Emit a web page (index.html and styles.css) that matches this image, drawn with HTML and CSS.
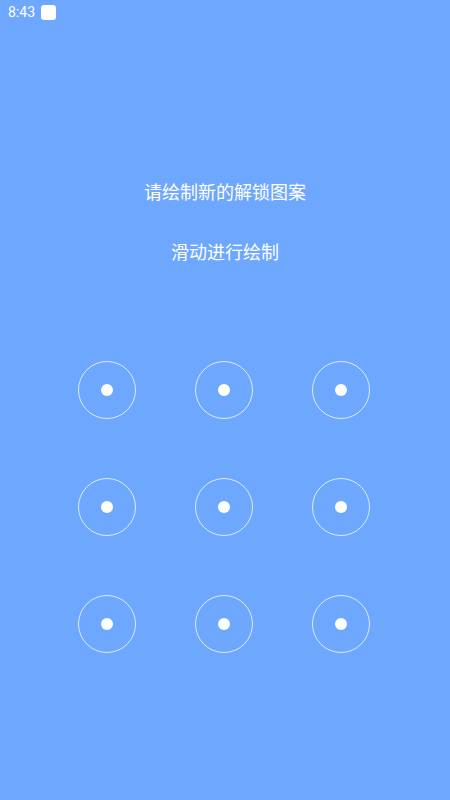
FILE: index.html
```html
<!DOCTYPE html>
<html lang="zh-CN">
<head>
    <meta charset="UTF-8">
    <meta name="viewport" content="width=device-width, initial-scale=1.0">
    <title>设置解锁图案</title>
    <link rel="stylesheet" href="styles.css">
</head>
<body>
    <div class="status-bar">
        <span class="time">8:43</span>
        <span class="status-icon"></span>
    </div>
    <main class="lock-screen">
        <h1 class="title">请绘制新的解锁图案</h1>
        <p class="hint">滑动进行绘制</p>
        <div class="pattern">
            <div class="cell"><div class="ring"><div class="dot"></div></div></div>
            <div class="cell"><div class="ring"><div class="dot"></div></div></div>
            <div class="cell"><div class="ring"><div class="dot"></div></div></div>
            <div class="cell"><div class="ring"><div class="dot"></div></div></div>
            <div class="cell"><div class="ring"><div class="dot"></div></div></div>
            <div class="cell"><div class="ring"><div class="dot"></div></div></div>
            <div class="cell"><div class="ring"><div class="dot"></div></div></div>
            <div class="cell"><div class="ring"><div class="dot"></div></div></div>
            <div class="cell"><div class="ring"><div class="dot"></div></div></div>
        </div>
    </main>
</body>
</html>
```

FILE: styles.css
```css
body {
    margin: 0;
    width: 450px;
    height: 800px;
    background-color: #6ea7fe;
    color: #fff;
    font-family: Roboto, "Noto Sans CJK SC", sans-serif;
    overflow: hidden;
}
.status-bar {
    height: 24px;
    display: flex;
    align-items: center;
    gap: 6px;
    padding-left: 8px;
}
.time {
    font-size: 14px;
}
.status-icon {
    width: 15px;
    height: 15px;
    background-color: #fff;
    border-radius: 3px;
}
.lock-screen {
    display: flex;
    flex-direction: column;
    align-items: center;
}
.title {
    margin: 157px 0 0;
    font-size: 18px;
    font-weight: normal;
    line-height: 24px;
}
.hint {
    margin: 36px 0 0;
    font-size: 18px;
    line-height: 24px;
}
.pattern {
    margin-top: 66px;
    margin-right: 2px;
    display: grid;
    grid-template-columns: repeat(3, 117px);
    grid-auto-rows: 117px;
}
.cell {
    display: flex;
    align-items: center;
    justify-content: center;
}
.ring {
    width: 56px;
    height: 56px;
    border: 1px solid rgba(255, 255, 255, 0.75);
    border-radius: 50%;
    display: flex;
    align-items: center;
    justify-content: center;
}
.dot {
    width: 12px;
    height: 12px;
    border-radius: 50%;
    background-color: #fff;
}
```
